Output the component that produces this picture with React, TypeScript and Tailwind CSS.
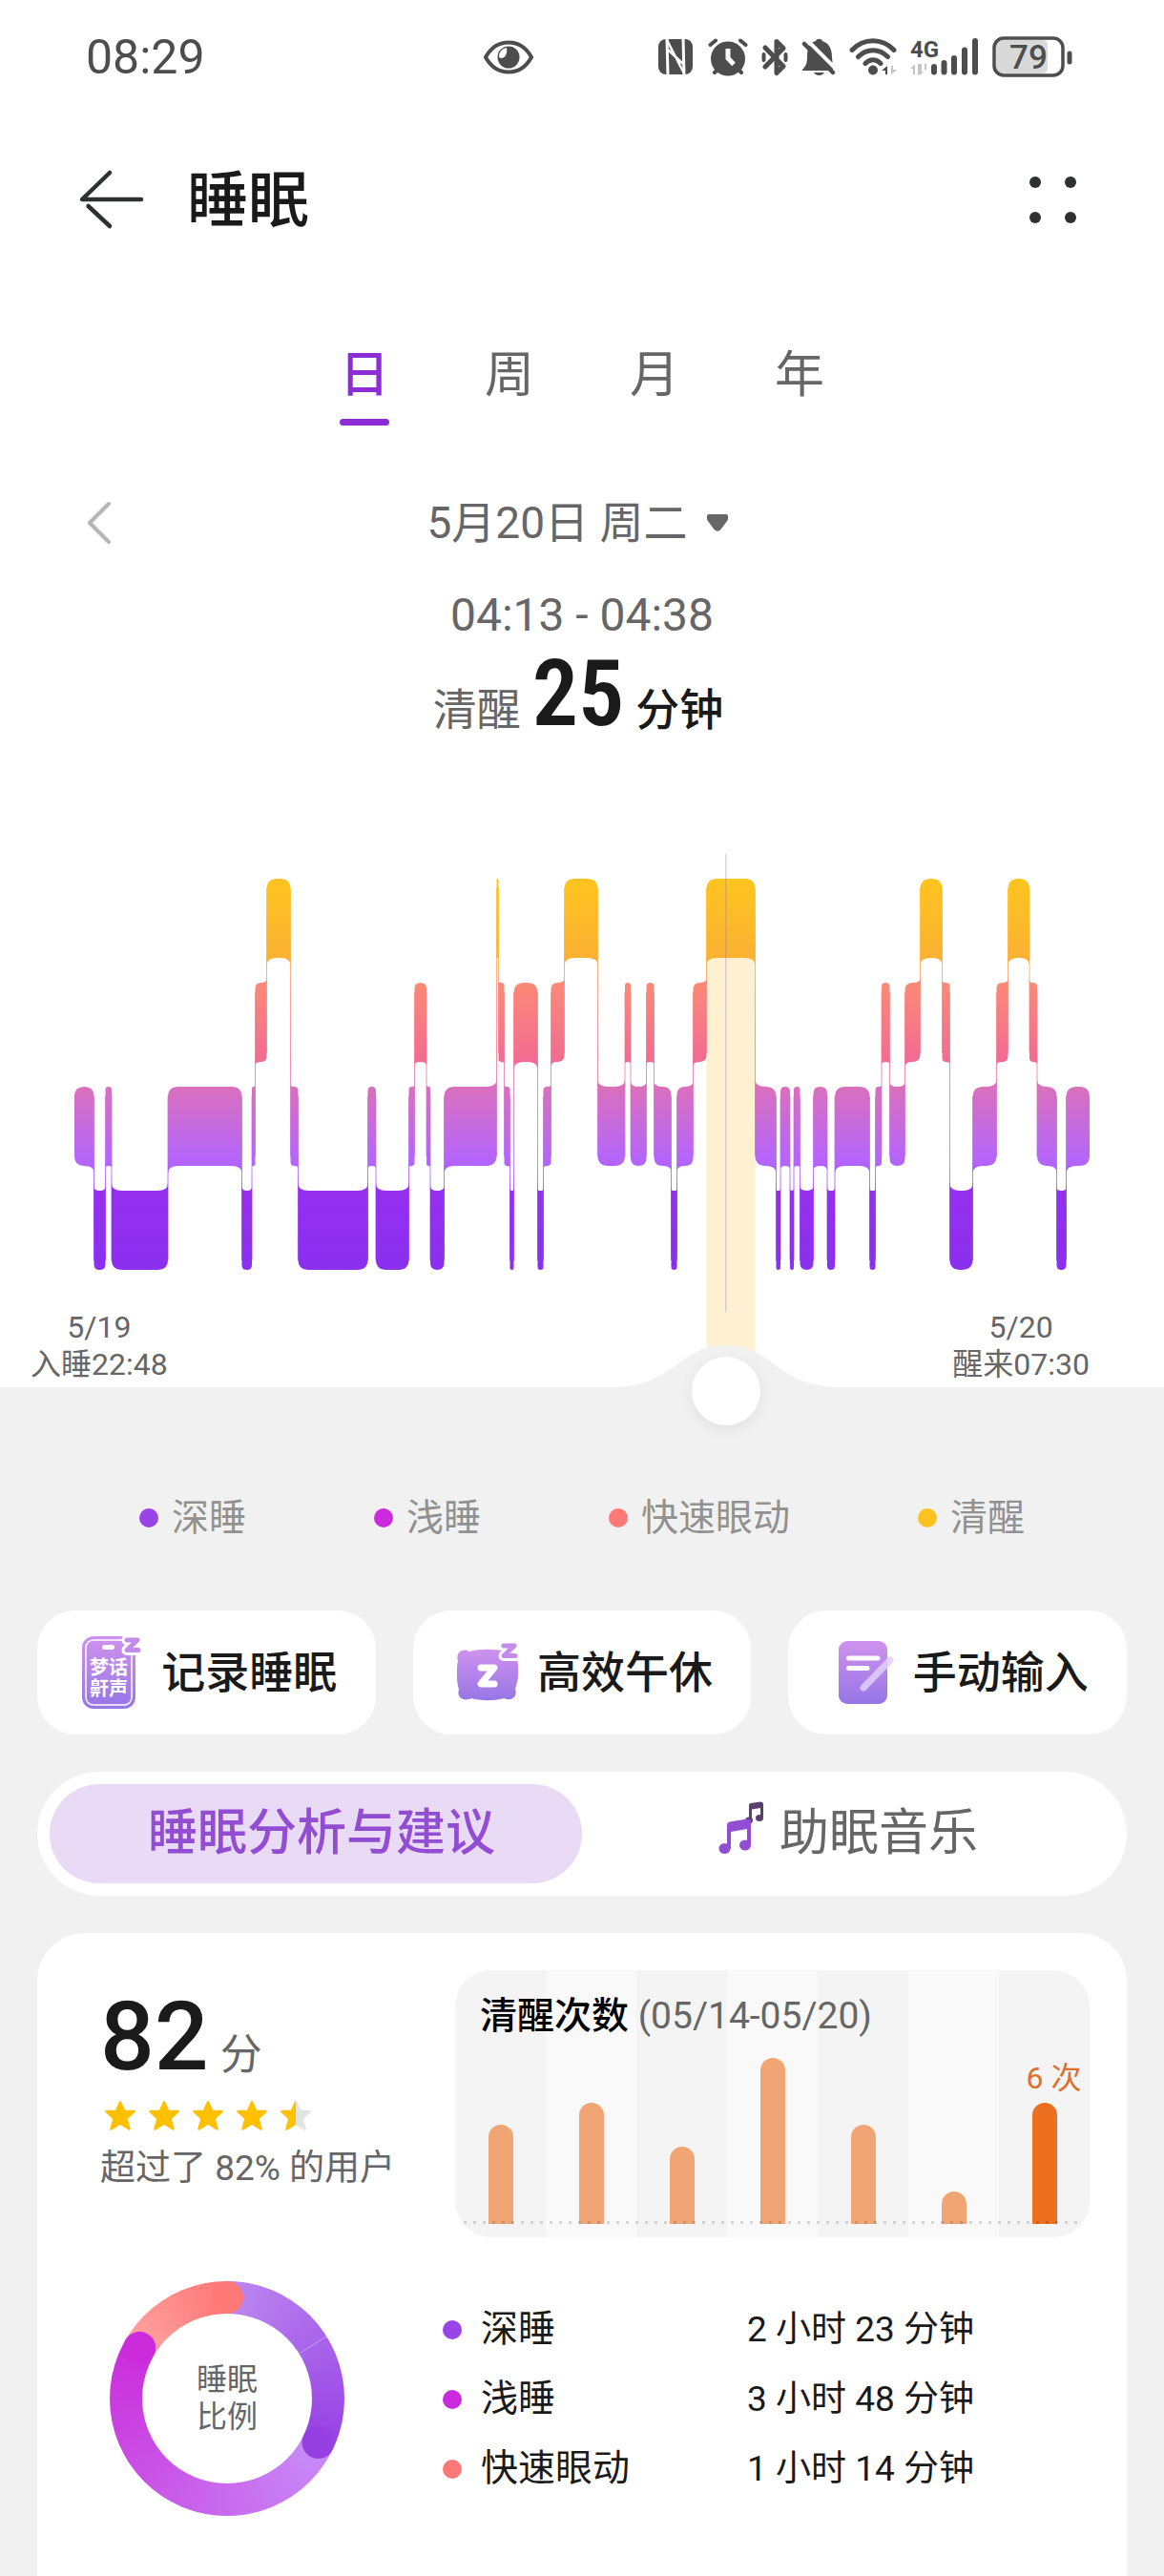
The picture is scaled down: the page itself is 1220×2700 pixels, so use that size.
import { useState } from "react";
import clsx from "clsx";

type Stage = 0 | 1 | 2 | 3;

// [end position on the time axis, stage]; 0 awake, 1 REM, 2 light, 3 deep
const AXIS_START = 78;
const AXIS_END = 1142;
const SLEEP_MINUTES = 522;
const SLEEP_OFFSET = 22 * 60 + 48;

const STAGES: [number, Stage][] = [
  [98.5, 2], [110.5, 3], [117, 2], [176, 3], [253.5, 2], [264, 3], [267.5, 2],
  [279.5, 1], [304.5, 0], [312.5, 2], [385.5, 3], [394, 2], [428.5, 3],
  [434.5, 2], [447, 1], [451, 2], [465.5, 3], [520.5, 2], [522.5, 0],
  [528.5, 1], [534.5, 2], [538.5, 3], [563.5, 1], [569.5, 3], [577.5, 2],
  [591.5, 1], [626.5, 0], [655, 2], [661, 1], [677.5, 2], [685.5, 1],
  [703.5, 2], [709.5, 3], [726.5, 2], [740.5, 1], [791.5, 0], [813.5, 2],
  [818, 3], [828, 2], [832, 3], [838.5, 2], [852.5, 3], [867, 2], [875, 3],
  [911.5, 2], [917.5, 3], [924, 2], [932.5, 1], [948.5, 2], [964.5, 1],
  [987.5, 0], [995.5, 1], [1019.5, 3], [1044.5, 2], [1056.5, 1], [1079, 0],
  [1087, 1], [1107.5, 2], [1117.5, 3], [1142, 2],
];

const segments = STAGES.map(([x1, stage], i) => ({
  x0: i === 0 ? AXIS_START : STAGES[i - 1][0],
  x1,
  stage,
}));

const STAGE_TOP = [921, 1030, 1139, 1248];
const STAGE_HEIGHT = 83;
const STAGE_NAMES = ["清醒", "快速眼动", "浅睡", "深睡"];
const BAND_COLORS = ["#fef1d2", "#ffe3e1", "#f4e0fa", "#e9dbf8"];

const LEGEND = [
  { name: "深睡", dot: "bg-[#9944e6]" },
  { name: "浅睡", dot: "bg-[#cb2bdc]" },
  { name: "快速眼动", dot: "bg-[#ff7878]" },
  { name: "清醒", dot: "bg-[#fdc122]" },
];

const DURATIONS = [
  { name: "深睡", dot: "bg-[#9944e6]", value: "2 小时 23 分钟" },
  { name: "浅睡", dot: "bg-[#cb2bdc]", value: "3 小时 48 分钟" },
  { name: "快速眼动", dot: "bg-[#ff7878]", value: "1 小时 14 分钟" },
];

const WAKE_COUNTS = [5, 6, 4, 8, 5, 2, 6];

function toMinutes(x: number) {
  return Math.round(((x - AXIS_START) / (AXIS_END - AXIS_START)) * SLEEP_MINUTES);
}

function formatClock(minutes: number) {
  const t = (SLEEP_OFFSET + minutes) % 1440;
  return `${String(Math.floor(t / 60)).padStart(2, "0")}:${String(t % 60).padStart(2, "0")}`;
}

// Corners flare towards a neighbour and are rounded off everywhere else
function segmentPath(i: number) {
  const { x0, x1, stage } = segments[i];
  const prev = segments[i - 1]?.stage;
  const next = segments[i + 1]?.stage;
  const r = Math.min((x1 - x0) / 2, 11);
  const f = r * 0.7;
  const top = STAGE_TOP[stage];
  const bottom = top + STAGE_HEIGHT;
  const tl = prev !== undefined && prev < stage ? top - f : top + r;
  const tr = next !== undefined && next < stage ? top - f : top + r;
  const bl = prev !== undefined && prev > stage ? bottom + f : bottom - r;
  const br = next !== undefined && next > stage ? bottom + f : bottom - r;
  return [
    `M${x0} ${tl}`,
    `Q${x0} ${top} ${x0 + r} ${top}`,
    `H${x1 - r}`,
    `Q${x1} ${top} ${x1} ${tr}`,
    `V${br}`,
    `Q${x1} ${bottom} ${x1 - r} ${bottom}`,
    `H${x0 + r}`,
    `Q${x0} ${bottom} ${x0} ${bl}`,
    "Z",
  ].join("");
}

function StatusBar() {
  return (
    <div className="flex h-30 items-center pr-24 pl-[90px] text-[#4d4d4d]">
      <span className="text-[50px] leading-none">08:29</span>
      <svg className="ml-[290px] h-10 w-14" viewBox="0 0 56 40" fill="none">
        <path d="M4 20C10 9 18 4.500 28 4.500S46 9 52 20C46 31 38 35.500 28 35.500S10 31 4 20Z" stroke="currentColor" strokeWidth="4" />
        <circle cx="28" cy="20" r="11.500" fill="currentColor" />
        <path d="M18 19a9 9 0 0 1 8-9c1 6-1 10-5 11-2 0-3-1-3-2Z" fill="#fff" />
      </svg>
      <div className="ml-auto flex items-center">
        <svg className="h-10 w-9" viewBox="0 0 36 40">
          <rect y="1" width="36" height="37" rx="8" fill="currentColor" />
          <path d="M9 0L10 39M27 39L26 0" stroke="#fff" strokeWidth="3" />
          <path d="M9 2L26.500 36M10 12L26 27" stroke="#fff" strokeWidth="2.500" />
        </svg>
        <svg className="ml-4 h-10 w-[42px]" viewBox="0 0 42 40" stroke="currentColor" strokeLinecap="round">
          <circle cx="21" cy="21.500" r="18" fill="currentColor" stroke="none" />
          <path d="M2.500 7L8 2.500M39.500 7L34 2.500M7 36l4-4M35 36l-4-4" strokeWidth="4" />
          <path d="M21 11v10l6 6.500" fill="none" stroke="#fff" strokeWidth="5" strokeLinecap="butt" />
        </svg>
        <svg className="ml-3.5 h-10 w-7" viewBox="0 0 28 40" fill="none" stroke="currentColor" strokeWidth="5" strokeLinecap="round" strokeLinejoin="round">
          <path d="M4 10l19 19.500-7 7V3.500l7 7L4 30" />
          <path d="M2.500 17v6M25.500 17v6" strokeWidth="4" />
        </svg>
        <svg className="ml-3.5 h-10 w-9" viewBox="0 0 36 40" fill="currentColor">
          <path d="M1 33c4-4 5-7 5-14C6 9 10 4 15 3c1-3 6-3 7 0 6 2 10 7 10 17l1 11v3H1Z" />
          <path d="M13 36h11c-2 4-9 4-11 0Z" />
          <path d="M5 1L36 32" stroke="#fff" strokeWidth="4" />
          <path d="M3 6l30 30" stroke="currentColor" strokeWidth="4.500" strokeLinecap="round" />
        </svg>
        <svg className="ml-3.5 h-10 w-[50px]" viewBox="0 0 50 40" fill="none" stroke="currentColor" strokeWidth="5" strokeLinecap="round">
          <path d="M3 12.500C15-.5 35-.5 47 12.500M9.500 19.500c9-9 22-9 31 0M17 26.500c5-5 11-5 16 0" />
          <circle cx="25" cy="33.500" r="5" fill="currentColor" stroke="none" />
          <path d="M40 29v9h-2v-4h-4Z" fill="currentColor" stroke="none" />
          <path d="M44 29v9l6-5h-4v-4Z" fill="#c4c4c4" stroke="none" />
        </svg>
        <svg className="ml-3.5 h-14 w-[72px]" viewBox="0 -8 72 56">
          <text x="0" y="20" className="fill-current text-[24px] font-bold">4G</text>
          <path d="M5 27v11H3v-6H0ZM8 27h2v8h4l-6 4ZM15 27l2 0v6h-2ZM10 27h2v11h-2Z" fill="#c4c4c4" />
          <path d="M25 30v5.500M35.500 26v9.500M46 21v14.500M57 12.500v23M68 3v32.500" stroke="currentColor" strokeWidth="6" strokeLinecap="round" />
        </svg>
        <svg className="ml-3.5 h-11 w-21" viewBox="0 0 84 44" fill="none">
          <rect x="4" y="4" width="54" height="35" rx="5" fill="#d9d9d9" />
          <rect x="2" y="2" width="72" height="39" rx="10" stroke="currentColor" strokeWidth="3.500" />
          <path d="M81 18v9" stroke="currentColor" strokeWidth="5" strokeLinecap="round" />
          <text x="38" y="34" textAnchor="middle" className="fill-current text-[35px] font-medium">79</text>
        </svg>
      </div>
    </div>
  );
}

function SleepChart({ position, onChange }: { position: number; onChange: (v: number) => void }) {
  const x = AXIS_START + (position / SLEEP_MINUTES) * (AXIS_END - AXIS_START);
  const active = segments.find((s) => x < s.x1) ?? segments[segments.length - 1];
  return (
    <div className="relative">
      <svg className="block w-full" viewBox="0 880 1220 574">
        <defs>
          <linearGradient id="stages" gradientUnits="userSpaceOnUse" x1="0" y1="921" x2="0" y2="1330">
            <stop offset="0" stopColor="#fdc41f" />
            <stop offset="0.203" stopColor="#fbb132" />
            <stop offset="0.266" stopColor="#fb8a76" />
            <stop offset="0.467" stopColor="#f26b92" />
            <stop offset="0.533" stopColor="#da70bc" />
            <stop offset="0.733" stopColor="#b264ff" />
            <stop offset="0.8" stopColor="#952fee" />
            <stop offset="1" stopColor="#8b30ef" />
          </linearGradient>
        </defs>
        <rect
          x={active.x0}
          y={STAGE_TOP[active.stage] + STAGE_HEIGHT - 1}
          width={active.x1 - active.x0}
          height={1454 - STAGE_TOP[active.stage] - STAGE_HEIGHT}
          fill={BAND_COLORS[active.stage]}
        />
        <g fill="url(#stages)">
          {segments.map((s, i) => (
            <path key={s.x0} d={segmentPath(i)} />
          ))}
          {segments.slice(1).map((s, i) => {
            const upper = Math.min(s.stage, segments[i].stage);
            const lower = Math.max(s.stage, segments[i].stage);
            return (
              <rect
                key={s.x0}
                x={s.x0 - 0.5}
                y={STAGE_TOP[upper] + 10}
                width="1"
                height={STAGE_TOP[lower] - STAGE_TOP[upper] + STAGE_HEIGHT - 20}
                opacity="0.75"
              />
            );
          })}
        </g>
        <path d={`M${x} 895V1375`} stroke="#8a6fd0" strokeOpacity="0.45" />
        <path
          d={`M${x - 112} 1454C${x - 52} 1450 ${x - 48} 1410 ${x} 1410S${x + 52} 1450 ${x + 112} 1454Z`}
          fill="#f1f1f1"
        />
      </svg>
      <div className="absolute inset-x-8 bottom-1 flex justify-between text-center text-[32px] leading-[39px] text-[#666]">
        <p>
          5/19
          <br />
          入睡22:48
        </p>
        <p className="pr-[46px]">
          5/20
          <br />
          醒来07:30
        </p>
      </div>
      <input
        type="range"
        aria-label="睡眠时间"
        min={0}
        max={SLEEP_MINUTES}
        value={position}
        onChange={(e) => onChange(Number(e.target.value))}
        className="absolute inset-x-[42px] -bottom-10 h-[72px] cursor-pointer appearance-none bg-transparent [&::-webkit-slider-thumb]:size-[72px] [&::-webkit-slider-thumb]:appearance-none [&::-webkit-slider-thumb]:rounded-full [&::-webkit-slider-thumb]:bg-white [&::-webkit-slider-thumb]:shadow-[0_4px_16px_rgba(0,0,0,0.07)]"
      />
    </div>
  );
}

function IconGradient({ id }: { id: string }) {
  return (
    <linearGradient id={id} x1="0" y1="0" x2="0" y2="1">
      <stop offset="0" stopColor="#cf92ee" />
      <stop offset="1" stopColor="#9676e5" />
    </linearGradient>
  );
}

// Sleep mark with a white rim that cuts into the shape below it
function SleepMark() {
  return (
    <g fill="none" strokeLinejoin="round" strokeLinecap="round">
      <path d="M4 4H15L4 14.500H16" stroke="#fff" strokeWidth="11" />
      <path d="M4 4H15L4 14.500H16" stroke="#c38bec" strokeWidth="5" />
    </g>
  );
}

function PhoneIcon() {
  return (
    <svg className="h-20 w-16" viewBox="0 0 64 80">
      <defs><IconGradient id="phone" /></defs>
      <rect x="1" y="2" width="56" height="76" rx="12" fill="url(#phone)" />
      <rect x="5" y="6" width="48" height="68" rx="8" fill="none" stroke="#fff" strokeWidth="1.500" />
      <rect x="22" y="11" width="13" height="5" rx="2.500" fill="#fff" />
      <g transform="translate(44 2)">
        <SleepMark />
      </g>
      <g className="fill-white text-[20px] font-bold" textAnchor="middle">
        <text x="29" y="42">梦话</text>
        <text x="29" y="64">鼾声</text>
      </g>
    </svg>
  );
}

function PillowIcon() {
  return (
    <svg className="h-20 w-16" viewBox="0 0 64 80">
      <defs><IconGradient id="pillow" /></defs>
      <path
        d="M13 18C25 15 39 15 51 18C58 14 65 19 63 26C65 37 65 46 61 57C64 65 57 71 49 67C38 70 26 70 15 67C7 71-1 66 2 58C-1 47-1 37 1 28C-2 19 6 14 13 18Z"
        fill="url(#pillow)"
      />
      <path d="M25 35h14L25 52h14" fill="none" stroke="#fff" strokeWidth="7" strokeLinejoin="round" strokeLinecap="round" />
      <g transform="translate(45 8)">
        <SleepMark />
      </g>
    </svg>
  );
}

function NoteIcon() {
  return (
    <svg className="h-20 w-16" viewBox="0 0 64 80">
      <defs><IconGradient id="note" /></defs>
      <rect x="6" y="7" width="51" height="66" rx="9" fill="url(#note)" />
      <path d="M16.500 25H47M16.500 35.500H36" stroke="#fff" strokeWidth="5" strokeLinecap="round" />
      <path d="M32 56L60 27" stroke="#e3cffb" strokeOpacity="0.85" strokeWidth="7" strokeLinecap="round" />
    </svg>
  );
}

function MusicIcon() {
  return (
    <svg className="-mt-3 h-14 w-12" viewBox="0 0 48 56">
      <g fill="#58406f">
        <path d="M32 22V4q0-2 2-2l10-1.500q3 0 3 3V17h-3V7l-9 1.500V22Z" />
        <ellipse cx="43" cy="17.500" rx="4" ry="3.500" />
        <ellipse cx="32" cy="20" rx="4" ry="3.500" />
      </g>
      <g fill="#924dd3">
        <path d="M9 50V25q0-3 3-3.500L30 18.500q4-.5 4 3V47h-4V29l-17 3V50Z" />
        <ellipse cx="6.500" cy="49.500" rx="6" ry="5.500" />
        <ellipse cx="28" cy="46" rx="6" ry="5.500" />
      </g>
    </svg>
  );
}

const ACTIONS = [
  { label: "记录睡眠", Icon: PhoneIcon },
  { label: "高效午休", Icon: PillowIcon },
  { label: "手动输入", Icon: NoteIcon },
];

const STAR = "M17 2.500L21.300 12H31.500L23.500 19.500L26.500 30.500L17 24.500L7.500 30.500L10.500 19.500L2.500 12H12.700Z";

function Star({ half = false }: { half?: boolean }) {
  return (
    <svg className="h-[34px] w-[34px]" viewBox="0 0 34 34" strokeWidth="2.500" strokeLinejoin="round">
      <path d={STAR} fill={half ? "#e3e3e3" : "#ffc000"} stroke={half ? "#e3e3e3" : "#ffc000"} />
      {half && (
        <>
          <clipPath id="half-star"><rect width="17" height="34" /></clipPath>
          <path d={STAR} fill="#ffc000" stroke="#ffc000" clipPath="url(#half-star)" />
        </>
      )}
    </svg>
  );
}

function WakeChart() {
  return (
    <div className="relative h-[280px] overflow-hidden rounded-[38px]">
      <div className="grid h-full grid-cols-7">
        {WAKE_COUNTS.map((count, i) => {
          const last = i === WAKE_COUNTS.length - 1;
          return (
            <div
              key={i}
              className={clsx("flex flex-col items-center justify-end pb-3.5", i % 2 ? "bg-[#f9f9f9]" : "bg-[#f4f4f4]")}
            >
              {last && <span className="mb-1 pl-5 text-[32px] leading-[44px] whitespace-nowrap text-[#dd6f2c]">{count} 次</span>}
              <div
                className={clsx("w-[26px] rounded-t-full", last ? "bg-[#ec701f]" : "bg-[#f1a575]")}
                style={{ height: Math.round(count * 23.4 - 13) }}
              />
            </div>
          );
        })}
      </div>
      <svg className="absolute inset-x-0 bottom-3.5 h-[3px] w-full">
        <path d="M9 1.500H660" stroke="#000" strokeOpacity="0.14" strokeWidth="3" strokeDasharray="3 7" />
      </svg>
      <h2 className="absolute top-5 left-[26px] text-[39px] leading-[56px] font-medium text-black">
        清醒次数 <span className="font-normal text-[#666]">(05/14-05/20)</span>
      </h2>
    </div>
  );
}

// End angle of each share of the ring, clockwise from the top
const RING_CAPS = [
  { angle: 360, color: "#ff7878" },
  { angle: 300.1, color: "#cb2bda" },
  { angle: 115.7, color: "#9640e4" },
];

function StageRing() {
  return (
    <div className="relative size-[246px] rounded-full bg-[conic-gradient(#bd88f0_0deg,#9640e4_115.7deg,#c78df8_115.7deg,#cb2bda_300.1deg,#ffa3a0_300.1deg,#ff7676_360deg)]">
      <svg className="absolute inset-0" viewBox="0 0 246 246">
        {RING_CAPS.map(({ angle, color }) => (
          <circle key={angle} cx="123" cy="17" r="17" fill={color} transform={`rotate(${angle} 123 123)`} />
        ))}
        <path d="M123 0V34" stroke="#fff" strokeOpacity="0.4" strokeWidth="0.800" transform="rotate(58 123 123)" />
      </svg>
      <div className="absolute inset-[34px] flex items-center justify-center rounded-full bg-white text-center text-[32px] leading-[39px] text-[#666]">
        睡眠
        <br />
        比例
      </div>
    </div>
  );
}

export default function App() {
  const [range, setRange] = useState("日");
  const [position, setPosition] = useState(335);
  const [tab, setTab] = useState("analysis");

  const x = AXIS_START + (position / SLEEP_MINUTES) * (AXIS_END - AXIS_START);
  const active = segments.find((s) => x < s.x1) ?? segments[segments.length - 1];
  const from = toMinutes(active.x0);
  const to = toMinutes(active.x1);

  return (
    <div className="flex min-h-screen flex-col bg-[#f1f1f1] font-['Roboto','Noto_Sans_CJK_SC',sans-serif] text-[#1a1a1a]" lang="zh-CN">
      <div className="bg-white">
        <StatusBar />
        <header className="flex h-[178px] items-center pr-[92px] pl-[82px]">
          <button type="button" aria-label="返回">
            <svg className="h-16 w-[70px]" viewBox="0 0 70 64" fill="none" stroke="#2f3030" strokeWidth="4.500" strokeLinecap="round">
              <path d="M33 4L4 32H66M10.500 39L33 60" strokeLinejoin="round" />
            </svg>
          </button>
          <h1 className="ml-11 pt-1 text-[64px] leading-none font-medium">睡眠</h1>
          <button type="button" aria-label="更多" className="ml-auto grid grid-cols-2 gap-[25px]">
            <span className="size-3 rounded-full bg-[#2f3030]" />
            <span className="size-3 rounded-full bg-[#2f3030]" />
            <span className="size-3 rounded-full bg-[#2f3030]" />
            <span className="size-3 rounded-full bg-[#2f3030]" />
          </button>
        </header>

        <nav className="flex justify-center gap-25 pt-16">
          {["日", "周", "月", "年"].map((item) => (
            <button
              key={item}
              type="button"
              onClick={() => setRange(item)}
              className={clsx("text-[52px] leading-[64px]", range === item ? "font-medium text-[#8e2dd6]" : "text-[#666]")}
            >
              {item}
              <span className={clsx("mt-[13px] block h-[7px] w-13 rounded-full", range === item && "bg-[#8e2dd6]")} />
            </button>
          ))}
        </nav>

        <div className="mt-[70px] grid grid-cols-[1fr_auto_1fr] items-center pr-24 pl-[88px] text-[46px] leading-[64px] text-[#666]">
          <button type="button" aria-label="前一天">
            <svg className="h-12 w-8" viewBox="0 0 32 48" fill="none" stroke="#b5b5b5" strokeWidth="4" strokeLinecap="round" strokeLinejoin="round">
              <path d="M26 4L6 24L26 44" />
            </svg>
          </button>
          <button type="button" className="flex items-center gap-5">
            5月20日 周二
            <svg className="h-5 w-6" viewBox="0 0 24 20">
              <path d="M3 3H21V6L14 15.500Q12 18 10 15.500L3 6Z" fill="#666" stroke="#666" strokeWidth="4" strokeLinejoin="round" />
            </svg>
          </button>
        </div>
        <p className="mt-[35px] text-center text-[48px] leading-[60px] text-[#666]">
          {formatClock(from)} - {formatClock(to)}
        </p>
        <p className="flex items-baseline justify-center gap-3 pr-2 text-[46px] leading-none">
          <span className="text-[#666]">{STAGE_NAMES[active.stage]}</span>
          <span className="text-[96px] leading-[104px] font-semibold [font-family:'Roboto_Condensed',Roboto,sans-serif]">
            {to - from}
          </span>
          <span className="font-medium">分钟</span>
        </p>
        <div className="pt-[101px]">
          <SleepChart position={position} onChange={setPosition} />
        </div>
      </div>

      <ul className="flex justify-center gap-[134px] pt-[113px] text-[39px] leading-[48px] text-[#919191]">
        {LEGEND.map(({ name, dot }) => (
          <li key={name} className="flex items-center gap-3.5">
            <span className={clsx("size-5 rounded-full", dot)} />
            {name}
          </li>
        ))}
      </ul>

      <main className="flex flex-1 flex-col px-[39px] pt-[73px]">
        <div className="grid grid-cols-3 gap-[39px]">
          {ACTIONS.map(({ label, Icon }) => (
            <button
              key={label}
              type="button"
              className="flex h-[130px] items-center justify-center gap-5 rounded-[40px] bg-white pl-1.5 text-[46px] leading-none font-medium whitespace-nowrap"
            >
              <Icon />
              {label}
            </button>
          ))}
        </div>

        <div className="mt-[39px] grid h-[130px] grid-cols-2 rounded-full bg-white p-[13px] text-[52px] leading-none">
          <button
            type="button"
            onClick={() => setTab("analysis")}
            className={clsx("rounded-full pl-3", tab === "analysis" ? "bg-[#e9dbf6] font-medium text-[#924dd3]" : "text-[#666]")}
          >
            睡眠分析与建议
          </button>
          <button
            type="button"
            onClick={() => setTab("music")}
            className={clsx("flex items-center justify-center gap-4 rounded-full", tab === "music" ? "bg-[#e9dbf6] font-medium text-[#924dd3]" : "text-[#666]")}
          >
            <MusicIcon />
            助眠音乐
          </button>
        </div>

        <section className="mt-[39px] flex-1 rounded-t-[50px] bg-white pt-[39px] pr-[39px] pb-16 pl-[66px]">
          <div className="grid grid-cols-[372px_1fr]">
            <div className="pt-5">
              <p className="flex items-baseline gap-3 leading-none">
                <span className="text-[100px] leading-[100px] font-medium">82</span>
                <span className="text-[44px] text-[#666]">分</span>
              </p>
              <div className="mt-4 flex gap-3 pl-1" role="img" aria-label="4.5 / 5">
                <Star />
                <Star />
                <Star />
                <Star />
                <Star half />
              </div>
              <p className="mt-2 text-[37px] leading-[60px] text-[#666]">超过了 82% 的用户</p>
            </div>
            <WakeChart />
          </div>
          <div className="mt-[46px] flex items-start pl-2.5">
            <StageRing />
            <table className="mt-3.5 ml-[103px]">
              <tbody>
                {DURATIONS.map(({ name, dot, value }) => (
                  <tr key={name} className="h-[73px]">
                    <th scope="row" className="w-[319px] text-left text-[39px] leading-none font-normal">
                      <span className="flex items-center gap-5">
                        <span className={clsx("size-5 rounded-full", dot)} />
                        {name}
                      </span>
                    </th>
                    <td className="text-[37px] leading-none whitespace-nowrap">{value}</td>
                  </tr>
                ))}
              </tbody>
            </table>
          </div>
        </section>
      </main>
    </div>
  );
}
